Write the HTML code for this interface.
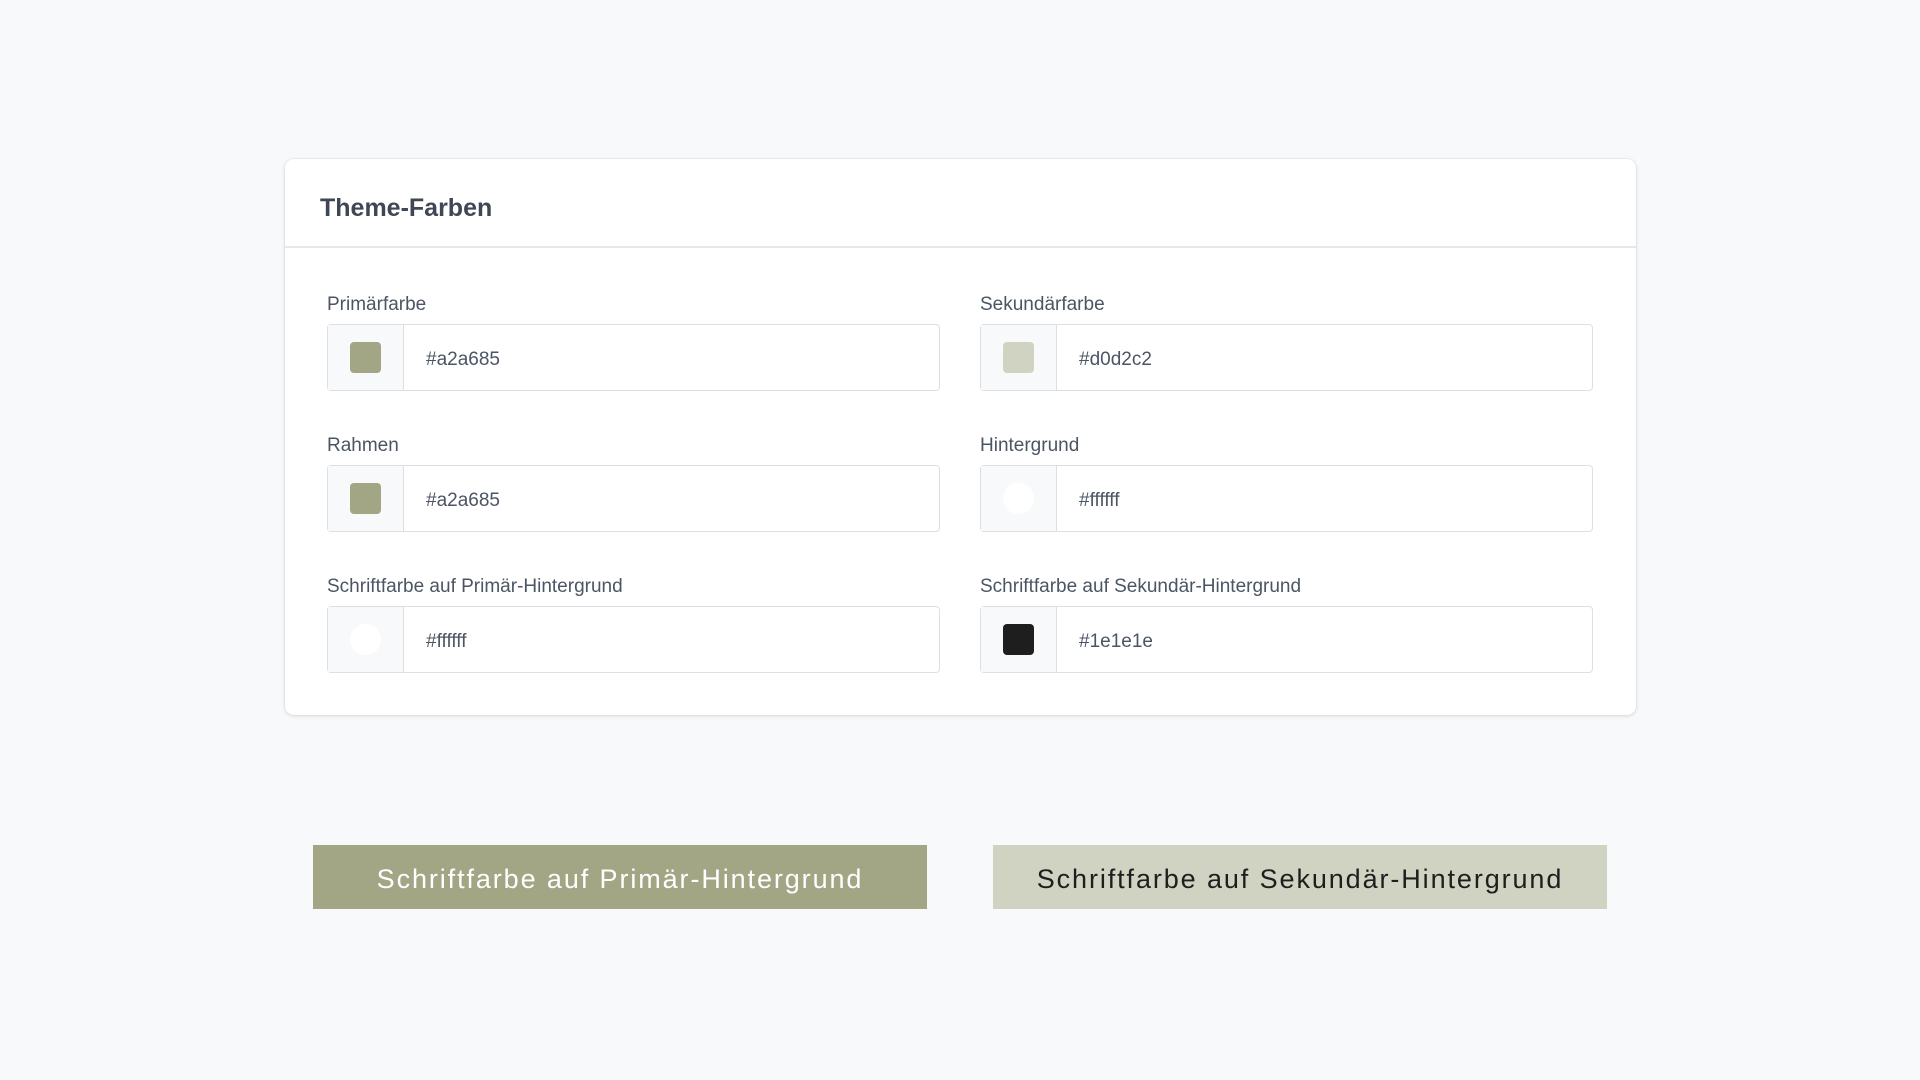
<!DOCTYPE html>
<html><head><meta charset="utf-8"><style>
body{margin:0;width:1920px;height:1080px;background:#f8f9fb;font-family:"Liberation Sans",sans-serif;position:relative;overflow:hidden}
.card{position:absolute;left:285px;top:159px;width:1351px;height:556px;background:#fff;border-radius:9px;box-shadow:0 1px 4px rgba(0,0,0,.12),0 0 0 1px rgba(0,0,0,.03)}
.hd{height:89px;border-bottom:2px solid #e5e7eb;box-sizing:border-box;padding-left:35px;line-height:98px;font-size:25px;font-weight:bold;color:#3f4654}
.f{position:absolute;width:613px}
.lb{font-size:19px;color:#4b5563;height:22px;padding-top:2px}
.in{position:absolute;top:32px;left:0;width:613px;height:67px;border:1.5px solid #dcdfe4;border-radius:4px;box-sizing:border-box;display:flex}
.sw{width:75px;background:#f8f9fa;border-right:1.5px solid #dcdfe4;display:flex;align-items:center;justify-content:center}
.sw div{width:31px;height:31px;border-radius:4px}
.tx{line-height:70px;padding-left:22px;font-size:19px;color:#4b5563}
.btn{position:absolute;top:845px;width:614px;height:64px;line-height:68px;text-align:center;font-size:27px;letter-spacing:1.9px}
</style></head><body>
<div class="card"><div class="hd">Theme-Farben</div></div>
<div class="f" style="left:327px;top:292px"><div class="lb">Primärfarbe</div><div class="in"><div class="sw"><div style="background:#a2a685"></div></div><div class="tx">#a2a685</div></div></div>
<div class="f" style="left:980px;top:292px"><div class="lb">Sekundärfarbe</div><div class="in"><div class="sw"><div style="background:#d0d2c2"></div></div><div class="tx">#d0d2c2</div></div></div>
<div class="f" style="left:327px;top:433px"><div class="lb">Rahmen</div><div class="in"><div class="sw"><div style="background:#a2a685"></div></div><div class="tx">#a2a685</div></div></div>
<div class="f" style="left:980px;top:433px"><div class="lb">Hintergrund</div><div class="in"><div class="sw"><div style="background:#fff;border-radius:50%"></div></div><div class="tx">#ffffff</div></div></div>
<div class="f" style="left:327px;top:574px"><div class="lb">Schriftfarbe auf Primär-Hintergrund</div><div class="in"><div class="sw"><div style="background:#fff;border-radius:50%"></div></div><div class="tx">#ffffff</div></div></div>
<div class="f" style="left:980px;top:574px"><div class="lb">Schriftfarbe auf Sekundär-Hintergrund</div><div class="in"><div class="sw"><div style="background:#1e1e1e"></div></div><div class="tx">#1e1e1e</div></div></div>
<div class="btn" style="left:313px;background:#a2a685;color:#fff">Schriftfarbe auf Primär-Hintergrund</div>
<div class="btn" style="left:993px;background:#d0d2c2;color:#1e1e1e">Schriftfarbe auf Sekundär-Hintergrund</div>
</body></html>
